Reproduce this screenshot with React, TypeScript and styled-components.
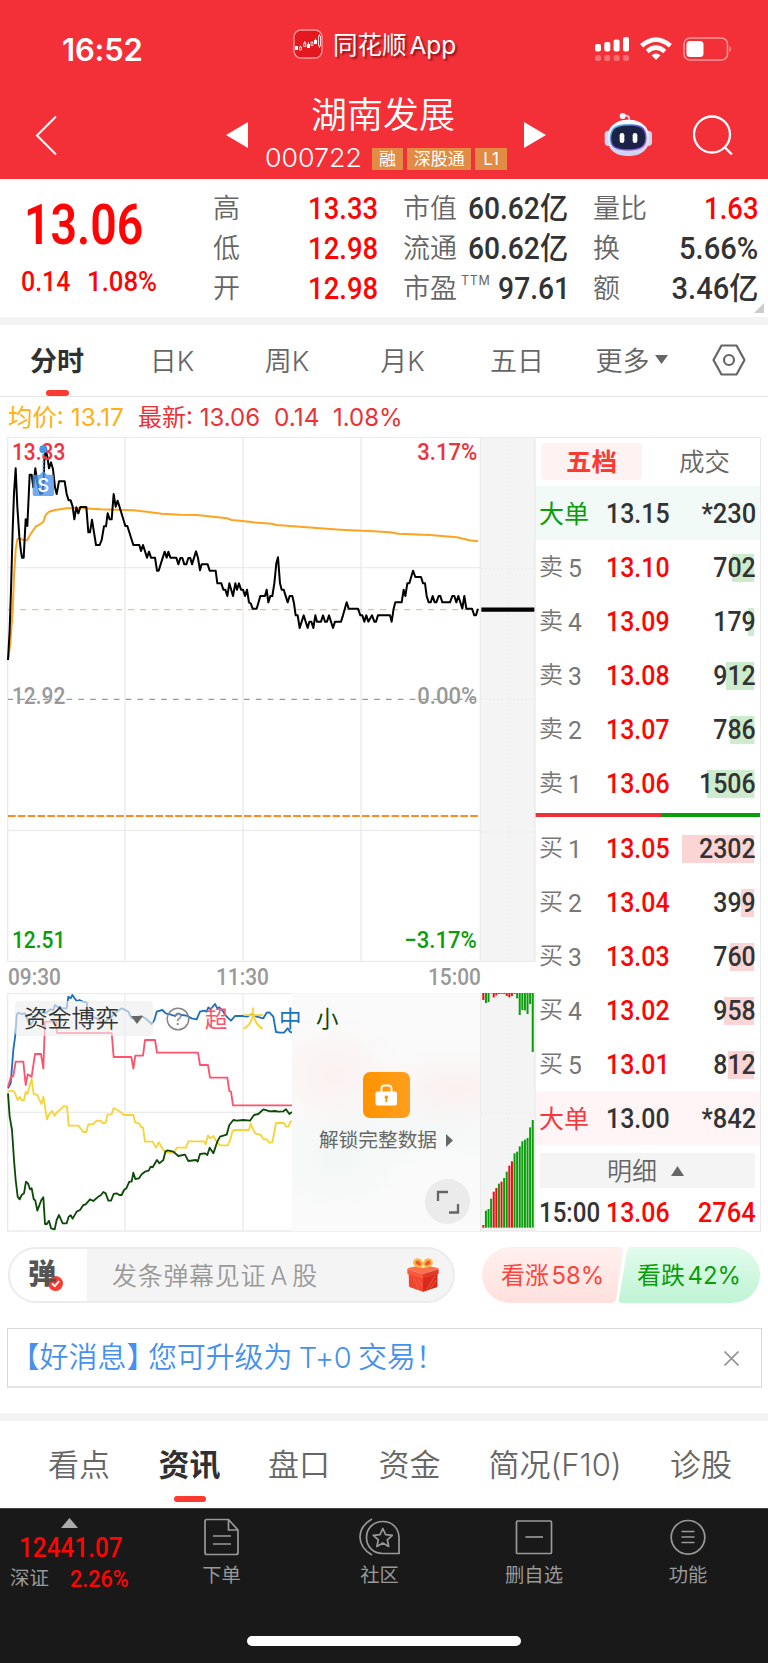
import React from "react";
import styled, { createGlobalStyle } from "styled-components";

const SANS = `Inter, "Noto Sans CJK SC", sans-serif`;
const DIN = `Roboto, "Noto Sans CJK SC", sans-serif`;

const Global = createGlobalStyle`
  * { box-sizing: border-box; }
  body { margin: 0; background: #fff; font-family: ${SANS}; color: #333; }
  svg { display: block; flex: none; }
`;

const Page = styled.div`
  width: 768px;
  height: 1663px;
  overflow: hidden;
  background: #fff;
  display: flex;
  flex-direction: column;
`;

type TextProps = {
  $size: number;
  $color?: string;
  $weight?: number;
  $fit?: number;
  $origin?: string;
  $track?: number;
  $space?: number;
};

const Label = styled.span<TextProps>`
  display: inline-block;
  flex: none;
  white-space: nowrap;
  line-height: 1.2;
  font-family: ${SANS};
  font-size: ${(p) => p.$size}px;
  color: ${(p) => p.$color ?? "#666"};
  font-weight: ${(p) => p.$weight ?? 400};
  letter-spacing: ${(p) => p.$track ?? 0}px;
  word-spacing: ${(p) => p.$space ?? 0}px;
  transform: scaleX(${(p) => p.$fit ?? 1});
  transform-origin: ${(p) => p.$origin ?? "left"} center;
`;

const Figure = styled(Label)`
  font-family: ${DIN};
`;

/* ---------- header ---------- */

const Header = styled.header`
  flex: none;
  height: 179px;
  background: #f33038;
  color: #fff;
`;

const StatusBar = styled.div`
  height: 90px;
  padding: 8px 0 0 62px;
  display: flex;
  align-items: center;
`;

const Clock = styled.div`
  width: 231px;
  font-size: 31px;
  font-weight: 600;
  line-height: 36px;
  letter-spacing: -0.2px;
  padding-bottom: 2px;
  margin-top: 3px;
`;

const AppBadge = styled.div`
  width: 302px;
  display: flex;
  align-items: center;
  gap: 10px;
  padding-bottom: 10px;
  text-shadow: 2px 2px 2px rgba(90, 0, 0, 0.65);
`;

const AppName = styled.div`
  padding-top: 4px;
`;

const StatusIcons = styled.div`
  display: flex;
  align-items: center;
  gap: 11px;
  padding-bottom: 5px;
  margin-top: 4px;
`;

const NavBar = styled.div`
  height: 89px;
  display: flex;
  align-items: center;
`;

const NavTitle = styled.div`
  width: 276px;
  height: 89px;
  padding-top: 2px;
  display: flex;
  flex-direction: column;
  align-items: center;
`;

const StockName = styled.div`
  font-size: 36px;
  line-height: 44px;
  font-weight: 350;
  margin-left: -6px;
  padding-top: 1px;
`;

const CodeRow = styled.div`
  width: 242px;
  height: 24px;
  margin-top: 10px;
  display: flex;
  align-items: center;
  gap: 4px;
`;

const CodeBox = styled.div`
  width: 103px;
  margin-top: -2px;
`;

const Tag = styled.span<{ $w: number }>`
  width: ${(p) => p.$w}px;
  height: 22px;
  line-height: 22px;
  background: #e18b45;
  font-size: 17px;
  text-align: center;
  white-space: nowrap;
`;

const Spacer = styled.div<{ $w: number }>`
  flex: none;
  width: ${(p) => p.$w}px;
`;

/* ---------- quote summary ---------- */

const Quote = styled.section`
  flex: none;
  height: 138px;
  display: flex;
  position: relative;
`;

const PriceBlock = styled.div`
  width: 213px;
  padding: 13px 0 0 21px;
`;

const LastPrice = styled.div`
  padding-left: 3px;
`;

const ChangeRow = styled.div`
  display: flex;
  padding-top: 7px;
`;

const ChangeCell = styled.div<{ $w: number }>`
  width: ${(p) => p.$w}px;
`;

const StatColumn = styled.div<{ $w: number; $gap: number }>`
  width: ${(p) => p.$w}px;
  margin-right: ${(p) => p.$gap}px;
  padding-top: 10px;
`;

const StatRow = styled.div`
  height: 40px;
  display: flex;
  align-items: center;
  justify-content: space-between;
`;

const StatName = styled.div`
  display: flex;
  align-items: flex-start;
  gap: 4px;
`;

const Corner = styled.i`
  position: absolute;
  right: 4px;
  bottom: 4px;
  border-left: 10px solid transparent;
  border-bottom: 10px solid #ccc;
`;

const Divider = styled.div<{ $h: number }>`
  flex: none;
  height: ${(p) => p.$h}px;
  background: #f4f4f4;
`;

/* ---------- tabs ---------- */

const PeriodTabs = styled.nav`
  flex: none;
  height: 72px;
  border-bottom: 1px solid #e8e8e8;
  display: flex;
`;

const Tab = styled.div<{ $w: number; $active?: boolean; $size?: number }>`
  flex: none;
  width: ${(p) => p.$w}px;
  height: 100%;
  padding-bottom: 2px;
  display: flex;
  align-items: center;
  justify-content: center;
  gap: 5px;
  position: relative;
  font-size: ${(p) => p.$size ?? 27}px;
  white-space: nowrap;
  font-weight: ${(p) => (p.$active ? 600 : 350)};
  color: ${(p) => (p.$active ? "#303030" : "#666")};
`;

const Underline = styled.i<{ $w: number; $bottom: number }>`
  position: absolute;
  left: calc(50% - ${(p) => p.$w / 2}px);
  bottom: ${(p) => p.$bottom}px;
  width: ${(p) => p.$w}px;
  height: 6px;
  border-radius: 3px;
  background: #fd3a32;
`;

const InfoRow = styled.div`
  flex: none;
  height: 40px;
  padding: 2px 0 0 8px;
  display: flex;
  align-items: center;
`;

const InfoCell = styled.div<{ $w: number }>`
  flex: none;
  width: ${(p) => p.$w}px;
`;

/* ---------- charts ---------- */

const Market = styled.section`
  flex: none;
  height: 795px;
  padding-left: 7px;
  display: flex;
`;

const Charts = styled.div`
  width: 528px;
`;

const ChartPane = styled.div<{ $h: number }>`
  position: relative;
  height: ${(p) => p.$h}px;
`;

const Mark = styled.div<{ $x?: number; $r?: number; $y: number }>`
  position: absolute;
  top: ${(p) => p.$y}px;
  ${(p) => (p.$x !== undefined ? `left: ${p.$x}px;` : "")}
  ${(p) => (p.$r !== undefined ? `right: ${p.$r}px;` : "")}
  height: 30px;
  display: flex;
  align-items: center;
`;

const Overlay = styled.div`
  position: absolute;
  left: 0;
  top: 0;
`;

const TimeAxis = styled.div`
  height: 31px;
  width: 474px;
  padding: 0 0 1px 1px;
  display: flex;
  justify-content: space-between;
  align-items: center;
`;

const NoonTime = styled.div`
  margin-right: 4px;
`;

const Picker = styled.div`
  position: absolute;
  left: 8px;
  top: 8px;
  width: 138px;
  height: 35px;
  padding: 2px 0 0 9px;
  border-radius: 4px;
  background: rgba(238, 238, 238, 0.66);
  display: flex;
  align-items: center;
  gap: 11px;
`;

const LockPanel = styled.div`
  position: absolute;
  left: 285px;
  top: 0;
  width: 188px;
  height: 238px;
  background: radial-gradient(ellipse 70px 60px at 42px 82px, rgba(253, 238, 238, 0.75), transparent),
    radial-gradient(ellipse 110px 40px at 165px 96px, rgba(252, 237, 237, 0.75), transparent),
    radial-gradient(ellipse 80px 60px at 45px 165px, rgba(240, 247, 244, 0.8), transparent),
    radial-gradient(ellipse 120px 40px at 140px 135px, rgba(242, 247, 246, 0.8), transparent), #fafafa;
  display: flex;
  flex-direction: column;
  align-items: center;
  padding-top: 79px;
`;

const UnlockRow = styled.div`
  display: flex;
  align-items: center;
  gap: 9px;
  margin-top: 11px;
`;

const Expand = styled.div`
  position: absolute;
  right: 10px;
  bottom: 7px;
  width: 45px;
  height: 45px;
  border-radius: 50%;
  background: #ebebeb;
  display: flex;
  align-items: center;
  justify-content: center;
`;

/* ---------- order book ---------- */

const Book = styled.aside`
  width: 226px;
  border: 1px solid #e9e9e9;
  border-width: 1px 1px 1px 0;
`;

const BookTabs = styled.div`
  height: 48px;
  padding: 5px 0 0 6px;
  display: flex;
`;

const BookTab = styled.div<{ $w: number; $active?: boolean }>`
  flex: none;
  width: ${(p) => p.$w}px;
  height: 37px;
  border-radius: 4px;
  text-align: center;
  line-height: 37px;
  font-size: 25.5px;
  background: ${(p) => (p.$active ? "#fff2f2" : "transparent")};
  color: ${(p) => (p.$active ? "#fd3a32" : "#666")};
  font-weight: ${(p) => (p.$active ? 700 : 350)};
`;

const BookRow = styled.div<{ $bg?: string; $h?: number }>`
  height: ${(p) => p.$h ?? 54}px;
  padding: 1px 0 0 4px;
  display: flex;
  align-items: center;
  background: ${(p) => p.$bg ?? "transparent"};
`;

const BookName = styled.div`
  flex: none;
  width: 67px;
  display: flex;
  align-items: center;
  gap: 5px;
`;

const PriceCell = styled.div`
  flex: none;
  width: 67px;
`;

const VolumeCell = styled.div<{ $tone: string }>`
  flex: none;
  width: 83px;
  height: 28px;
  display: flex;
  align-items: center;
  justify-content: flex-end;
  background: linear-gradient(${(p) => p.$tone}, ${(p) => p.$tone}) right 2px top 0 no-repeat;
`;

const Balance = styled.div`
  height: 4px;
  margin: 3px 0 4px;
  display: flex;
`;

const BalancePart = styled.div<{ $w: number; $c: string }>`
  width: ${(p) => p.$w}px;
  background: ${(p) => p.$c};
`;

const DetailBar = styled.div`
  height: 35px;
  margin: 8px 5px 5px;
  padding-right: 4px;
  background: #f4f4f4;
  display: flex;
  align-items: center;
  justify-content: center;
  gap: 14px;
`;

/* ---------- comment strip, notice ---------- */

const Social = styled.section`
  flex: none;
  height: 72px;
  padding: 15px 8px 0;
  display: flex;
  justify-content: space-between;
`;

const Comment = styled.div`
  width: 447px;
  height: 56px;
  border: 2px solid #ececec;
  border-radius: 28px;
  background: #f4f4f4;
  overflow: hidden;
  display: flex;
  align-items: center;
`;

const Danmu = styled.div`
  width: 77px;
  height: 100%;
  background: #fff;
  display: flex;
  align-items: center;
  padding-left: 18px;
`;

const Check = styled.div`
  margin: 17px 0 0 -8px;
`;

const CommentHint = styled.div`
  width: 295px;
  padding-top: 2px;
`;

const Sentiment = styled.div`
  position: relative;
  width: 278px;
  height: 56px;
`;

const SentimentText = styled.div`
  position: absolute;
  inset: 0;
  display: flex;
  align-items: center;
  padding: 2px 0 0 19px;
`;

const SentimentCell = styled.div<{ $w: number }>`
  width: ${(p) => p.$w}px;
`;

const Notice = styled.section`
  flex: none;
  height: 60px;
  margin: 24px 6px 25px 7px;
  border: 1px solid #d9d9d9;
  border-bottom: 2px solid #e4e4e4;
  padding: 2px 22px 0 17px;
  display: flex;
  align-items: center;
  justify-content: space-between;
`;

const NoticeText = styled.div`
  display: flex;
  align-items: center;
  gap: 7px;
  font-feature-settings: "halt";
`;

const NewsTabs = styled.nav`
  flex: none;
  height: 87px;
  padding: 0 0 3px 28px;
  display: flex;
`;

/* ---------- bottom bar ---------- */

const BottomBar = styled.footer`
  flex: none;
  height: 155px;
  background: #191919;
  border-top: 1px solid #444;
  position: relative;
  display: flex;
`;

const IndexBlock = styled.div`
  width: 144px;
  padding: 9px 0 0 10px;
`;

const IndexRow = styled.div<{ $indent: number; $h: number }>`
  height: ${(p) => p.$h}px;
  padding-left: ${(p) => p.$indent}px;
  display: flex;
  align-items: center;
`;

const Action = styled.div<{ $w: number }>`
  width: ${(p) => p.$w}px;
  padding-top: 9px;
  display: flex;
  flex-direction: column;
  align-items: center;
  gap: 8px;
`;

const HomeIndicator = styled.i`
  position: absolute;
  left: 247px;
  bottom: 17px;
  width: 274px;
  height: 10px;
  border-radius: 5px;
  background: #fff;
`;

/* ---------- data ---------- */

const MORNING =
  "24,690 29,600 33,480 38,300 42,190 47,115 52,230 58,320 63,365 66,383 71,383 77,268 82,288 89,134 95,134 100,172 106,115 112,160 121,192 127,190 131,150 133,90 137,60 142,80 147,115 153,97 159,118 165,172 170,192 177,154 194,154 200,192 206,211 212,211 218,230 223,268 229,232 235,250 241,231 259,231 265,307 270,307 276,269 282,307 288,345 299,345 305,330 312,289 318,289 323,250 329,268 335,268 341,192 347,230 353,212 359,232 376,288 382,288 400,345 418,345 423,363 429,345 441,383 447,365 453,383 465,383 471,422 476,422 494,365 500,383 505,365 511,383 529,383 535,403 541,384 547,384 553,403 559,403 565,384 571,384 576,403 588,364 594,384 600,421 605,403 623,403 629,422 647,422 652,460 664,460 670,479 676,479 682,498 688,460 699,498 706,460 711,479 717,460 723,479 729,479 735,498 741,479 747,518";
const AFTERNOON =
  "26,517 32,520 38,536 50,536 61,498 75,498 80,479 85,517 91,498 97,498 103,460 109,400 114,382 120,460 125,479 131,479 143,517 149,498 157,498 162,520 167,556 173,556 179,594 191,556 203,594 208,575 214,575 220,594 226,556 231,575 243,575 249,556 255,575 261,575 267,556 279,594 285,575 303,575 309,556 320,517 326,536 354,536 361,556 367,556 373,575 379,556 385,575 396,556 403,575 408,575 414,556 450,556 455,575 461,536 466,517 485,517 491,479 496,498 502,460 508,460 519,422 526,441 543,441 549,460 555,460 560,498 566,517 572,517 578,498 584,517 589,517 596,498 601,498 607,517 630,517 637,498 643,498 649,517 655,498 667,536 673,498 679,536 696,536 703,556 708,556 714,536";
const AVERAGE =
  "24,690 31,640 38,540 42,440 47,360 52,328 58,325 70,330 82,330 90,315 100,300 108,289 120,283 130,275 137,255 147,245 165,240 200,235 240,234 300,238 350,239 400,241 440,245 485,251 540,254 590,255 640,260 682,265 695,270 720,272 760,277 815,281 830,285 920,292 1020,299 1120,304 1170,307 1195,311 1290,315 1370,322 1390,326 1408,331 1434,334";
const FLOW_MID =
  "24,325 32,310 40,210 46,165 50,105 54,98 65,102 75,100 85,125 92,135 105,112 120,98 140,98 150,88 160,90 165,75 172,80 185,85 200,85 205,50 212,55 217,45 224,55 230,63 238,60 248,65 260,67 263,95 275,110 290,115 300,125 315,125 335,110 350,95 365,85 385,95 395,115 415,110 425,108 440,118 455,132 463,120 470,95 487,90 497,100 510,103 525,108 535,100 545,105 560,107 575,115 590,118 600,95 612,92 620,95 625,82 632,88 645,72 652,85 658,82 670,95 680,110 693,122 705,108 730,108 740,110 755,103 770,110 790,115 800,98 808,97 820,110 828,156 840,158 852,158 863,145 870,155 876,158";
const FLOW_SUPER =
  "24,320 33,290 40,288 47,245 70,245 77,315 83,283 95,290 105,222 123,222 130,266 135,125 168,125 171,159 335,159 341,231 394,231 400,266 406,227 429,227 435,180 465,180 471,218 594,218 600,255 624,255 630,293 682,293 688,333 693,335 699,376 877,376";
const FLOW_LARGE =
  "24,335 35,332 43,335 53,360 59,350 66,362 72,360 77,335 82,342 95,297 101,342 112,345 124,372 130,350 141,418 147,403 156,393 164,407 172,395 180,390 190,379 201,379 206,437 235,437 250,456 259,456 265,433 280,432 290,422 303,423 308,430 317,428 323,403 335,403 341,384 352,390 360,395 372,405 400,405 406,428 417,430 424,442 429,442 435,485 458,485 468,503 476,487 490,510 500,517 523,519 530,503 558,503 565,484 612,484 617,493 624,466 630,475 640,468 650,485 660,496 683,496 690,482 697,455 702,450 747,450 752,430 760,450 767,461 782,465 790,477 800,478 808,488 817,487 828,429 852,429 858,440 865,440 872,424 876,424";
const FLOW_SMALL =
  "24,340 29,410 36,450 42,540 47,600 53,650 59,658 65,645 72,640 78,605 84,610 90,628 95,625 101,657 106,662 112,692 124,660 130,652 135,732 140,733 147,722 153,745 164,748 170,720 177,705 188,730 200,730 206,710 212,706 218,716 230,695 240,690 250,675 257,673 270,658 280,663 295,650 303,645 310,636 317,640 325,662 333,662 341,642 350,640 358,645 365,645 372,630 379,625 388,605 395,605 400,578 406,597 417,595 425,583 435,575 446,572 452,560 458,562 471,540 478,550 490,540 496,515 503,511 520,515 535,528 555,524 565,543 588,540 593,545 600,522 615,520 622,525 629,503 640,520 652,485 660,470 680,464 688,435 700,420 710,422 730,420 750,422 762,405 775,402 790,388 810,394 825,393 835,395 850,394 858,388 868,402 876,396";

const RISE = "#f00d12";
const FALL = "#0a9d0a";

/* colour and end of the hanging bar, colour and top of the standing bar */
const AUCTION: [string, number, string, number][] = [
  [RISE, 60, RISE, 735], [FALL, 69, FALL, 692], [FALL, 66, FALL, 687], [FALL, 40, FALL, 656],
  [RISE, 52, RISE, 635], [RISE, 46, RISE, 624], [RISE, 42, FALL, 611], [FALL, 42, RISE, 605],
  [RISE, 42, FALL, 594], [RISE, 48, FALL, 575], [RISE, 52, RISE, 557], [RISE, 48, RISE, 544],
  [FALL, 42, FALL, 520], [FALL, 55, FALL, 515], [FALL, 105, FALL, 499], [FALL, 90, FALL, 484],
  [FALL, 91, FALL, 479], [FALL, 102, FALL, 474], [FALL, 72, FALL, 442], [FALL, 216, FALL, 420],
];

const ASKS: [string, string, string, number][] = [
  ["5", "13.10", "702", 22], ["4", "13.09", "179", 6], ["3", "13.08", "912", 28],
  ["2", "13.07", "786", 24.5], ["1", "13.06", "1506", 47.5],
];
const BIDS: [string, string, string, number][] = [
  ["1", "13.05", "2302", 72], ["2", "13.04", "399", 13], ["3", "13.03", "760", 24],
  ["4", "13.02", "958", 30], ["5", "13.01", "812", 26],
];

const RED = "#fd0505";
const LINE = "#ebebeb";

/* ---------- pieces ---------- */

function Level({ side, row, tone }: { side: string; row: [string, string, string, number]; tone: string }) {
  const [level, price, volume, bar] = row;
  return (
    <BookRow>
      <BookName>
        <Label $size={24} $color="#777" $weight={350}>{side}</Label>
        <Figure $size={26.5} $color="#777" $fit={0.93}>{level}</Figure>
      </BookName>
      <PriceCell>
        <Figure $size={28} $color={RED} $weight={500} $fit={0.89}>{price}</Figure>
      </PriceCell>
      <VolumeCell $tone={tone} style={{ backgroundSize: `${bar}px 28px` }}>
        <Figure $size={28} $color="#333" $weight={500} $fit={0.89} $origin="right">{volume}</Figure>
      </VolumeCell>
    </BookRow>
  );
}

function Block({ color, bg, price, volume }: { color: string; bg: string; price: string; volume: string }) {
  return (
    <BookRow $bg={bg}>
      <BookName><Label $size={25} $color={color}>大单</Label></BookName>
      <PriceCell><Figure $size={28} $color="#333" $weight={500} $fit={0.89}>{price}</Figure></PriceCell>
      <VolumeCell $tone="transparent">
        <Figure $size={28} $color="#333" $weight={500} $fit={0.91} $origin="right">{volume}</Figure>
      </VolumeCell>
    </BookRow>
  );
}

type StatProps = { name: string; value: string; color?: string; note?: string; fit?: number };

function Stat({ name, value, color = "#333", note, fit = 0.885 }: StatProps) {
  return (
    <StatRow>
      <StatName>
        <Label $size={27} $weight={350}>{name}</Label>
        {note && <Label $size={12.5} $track={0.7}>{note}</Label>}
      </StatName>
      <Figure $size={31} $color={color} $weight={500} $fit={fit} $origin="right">{value}</Figure>
    </StatRow>
  );
}

function PriceChart() {
  return (
    <svg width="529" height="525" viewBox="21 21 1587 1575">
      <rect x="1443" y="22" width="162" height="1572" fill="#f4f4f4" />
      <g stroke={LINE} strokeWidth="4" fill="none">
        <path d="M22 22H1606M22 1594H1606M22 413H1441M22 1201H1441M375 22V1594M729 22V1594M1083 22V1594" />
        <path d="M23 22V1594M1441 22V1594M1605 22V1594" />
        <path d="M1443 416H1605M1526 22V1594M1443 808H1605M1443 1206H1605" strokeDasharray="4 8" />
      </g>
      <path d="M24 539H1432" stroke="#e0c39b" strokeWidth="4" strokeDasharray="18 18" />
      <path d="M24 808H1442" stroke="#999" strokeWidth="4" strokeDasharray="17 18.5" strokeDashoffset="2" />
      <path d="M24 1158H1434" stroke="#fd8c25" strokeWidth="6" strokeDasharray="23 6.5" />
      <g fill="none" strokeLinejoin="round">
        <polyline points={AVERAGE} stroke="#ffa321" strokeWidth="6" />
        <polyline points={MORNING} stroke="#000" strokeWidth="6" />
        <polyline points={AFTERNOON} stroke="#000" strokeWidth="6" transform="translate(720 0)" />
      </g>
      <path d="M1444 539H1603" stroke="#000" strokeWidth="13" />
    </svg>
  );
}

function SellMarker() {
  return (
    <svg width="529" height="525" viewBox="21 21 1587 1575">
      <path d="M130 60V128" stroke="#4a93ea" strokeWidth="5" strokeDasharray="6 5" />
      <circle cx="130" cy="58" r="12" fill="#4a93ea" />
      <path d="M104 134H119L130 122L141 134H157Q162 134 162 139V193Q162 198 157 198H103Q98 198 98 193V139Q98 134 104 134Z" fill="#4a93ea" opacity=".78" />
      <text x="130" y="186" textAnchor="middle" fontFamily="Inter" fontSize="54" fontWeight="500" fill="#fff">S</text>
    </svg>
  );
}

function FlowChart() {
  return (
    <svg width="529" height="239" viewBox="21 39 1587 717">
      <rect x="1443" y="40" width="162" height="713" fill="#f4f4f4" />
      <g stroke={LINE} strokeWidth="4" fill="none">
        <path d="M22 41H1606M22 753H1606M22 397H876M375 41V753M729 41V753M23 41V753M1441 41V753M1605 41V753" />
        <path d="M1443 400H1605M1526 41V753" strokeDasharray="4 8" />
      </g>
      <g fill="none" strokeWidth="5.5" strokeLinejoin="round">
        <polyline points={FLOW_MID} stroke="#1c70bd" />
        <polyline points={FLOW_SUPER} stroke="#ff526d" />
        <polyline points={FLOW_LARGE} stroke="#f7d436" />
        <polyline points={FLOW_SMALL} stroke="#0d4a07" />
      </g>
      {AUCTION.map(([top, end, bottom, start], i) => (
        <g key={i} transform={`translate(${1447 + i * 7.8} 0)`}>
          <rect y="39" width="6" height={end - 39} fill={top} />
          <rect y={start} width="6" height={743 - start} fill={bottom} />
        </g>
      ))}
    </svg>
  );
}

function AppIcon() {
  return (
    <svg width="30" height="30" viewBox="0 0 30 30">
      <rect x="1" y="1" width="28" height="28" rx="7" fill="#e3191f" stroke="#ff9a9c" strokeWidth="1.3" />
      <path d="M2 17h3v4H2zM14 15h3v4h-3zM21 11h3v4h-3z" fill="#fff" />
      <path d="M6.500 18h2v3h-2zM10.800 14h2v3.500h-2zM18 13.500h2v3h-2zM25.500 7h2v10h-2zM7.500 16.800V18M11.800 12v2M15.500 13v2M19 12v1.500M22.500 9.500v2M26.500 5v2M26.500 17v2" fill="none" stroke="#fff" strokeWidth=".8" />
    </svg>
  );
}

function Robot() {
  return (
    <svg width="49" height="45" viewBox="0 0 147 135">
      <defs>
        <linearGradient id="shell" x1="0" y1="0" x2="0" y2="1">
          <stop offset="0" stopColor="#fff" />
          <stop offset="1" stopColor="#c9d1f0" />
        </linearGradient>
        <linearGradient id="rim" x1="0" y1="0" x2="1" y2="1">
          <stop offset="0" stopColor="#45d4f5" />
          <stop offset=".45" stopColor="#5b4ee0" />
          <stop offset="1" stopColor="#c763e8" />
        </linearGradient>
      </defs>
      <path d="M58 12Q76 6 76 24" fill="none" stroke="#dfe4f5" strokeWidth="5" />
      <circle cx="56" cy="12" r="9" fill="#f3f5fc" />
      <rect x="2" y="56" width="22" height="46" rx="11" fill="#cfd5ef" />
      <rect x="122" y="56" width="22" height="46" rx="11" fill="#cfd5ef" />
      <path d="M73 23C113 23 136 46 136 78C136 116 108 132 73 132S10 116 10 78C10 46 33 23 73 23Z" fill="url(#shell)" />
      <path d="M73 37C108 37 128 44 128 78C128 108 108 116 73 116S18 108 18 78C18 44 38 37 73 37Z" fill="url(#rim)" />
      <path d="M73 41C106 41 124 48 124 78C124 105 106 112 73 112S22 105 22 78C22 48 40 41 73 41Z" fill="#1a2345" />
      <rect x="47" y="63" width="14" height="30" rx="7" fill="#fff" />
      <rect x="86" y="63" width="14" height="30" rx="7" fill="#fff" />
    </svg>
  );
}

function Gift() {
  return (
    <svg width="32" height="34" viewBox="0 0 96 102">
      <path d="M5 46L48 60L91 46V84Q91 87 88 88L48 101L9 88Q6 87 6 84Z" fill="#f2452f" />
      <path d="M48 60L91 46V84Q91 87 88 88L48 101Z" fill="#d92a1f" />
      <path d="M1 34Q1 31 4 30L48 20L92 30Q95 31 95 34L48 48Z" fill="#f9704e" />
      <path d="M1 34L48 48V62L3 49Q1 48 1 46Z" fill="#f9583d" />
      <path d="M95 34L48 48V62L93 49Q95 48 95 46Z" fill="#e23a28" />
      <path d="M20 58L36 94M34 64L44 84M60 94L84 54M70 92L88 66" stroke="#ff7a55" strokeWidth="2.500" opacity=".7" />
      <path d="M48 26C24 27 16 14 26 6C36 0 46 10 48 26C50 10 60 0 70 6C80 14 72 27 48 26Z" fill="#f6552f" stroke="#fcb643" strokeWidth="7" />
      <circle cx="48" cy="25" r="6" fill="#ffdf7a" />
    </svg>
  );
}

const Tri = ({ w, h, d, c }: { w: number; h: number; d: string; c: string }) => (
  <svg width={w} height={h} viewBox={`0 0 ${w} ${h}`}><path d={d} fill={c} /></svg>
);

export default function App() {
  return (
    <Page>
      <Global />
      <Header>
        <StatusBar>
          <Clock>16:52</Clock>
          <AppBadge>
            <AppIcon />
            <AppName><Label $size={24.5} $color="#fff" $space={-4}>同花顺 App</Label></AppName>
          </AppBadge>
          <StatusIcons>
            <svg width="34" height="24" viewBox="0 0 34 24" fill="#fff">
              <rect y="7" width="6" height="7.500" rx="2" />
              <rect x="9.300" y="5" width="6" height="9.500" rx="2" />
              <rect x="18.600" y="2.500" width="6" height="12" rx="2" />
              <rect x="28" width="6" height="14.500" rx="2" />
              <g opacity=".3">
                <rect y="18" width="6" height="6" rx="2" /><rect x="9.300" y="18" width="6" height="6" rx="2" />
                <rect x="18.600" y="18" width="6" height="6" rx="2" /><rect x="28" y="18" width="6" height="6" rx="2" />
              </g>
            </svg>
            <svg width="32" height="23" viewBox="0 0 32 23">
              <g fill="none" stroke="#fff" strokeWidth="4.600">
                <path d="M1.600 8.800Q16-3.600 30.400 8.800" />
                <path d="M7.200 14.400Q16 7 24.800 14.400" />
              </g>
              <path d="M11.500 18.300Q16 14.800 20.500 18.300L16 23Z" fill="#fff" />
            </svg>
            <svg width="50" height="24" viewBox="0 0 50 24">
              <rect x="1" y="1" width="43.500" height="22" rx="6" fill="none" stroke="#fff" strokeOpacity=".5" strokeWidth="1.500" />
              <rect x="3.500" y="4" width="17" height="16" rx="3.500" fill="#fff" />
              <path d="M46.500 8.500Q49.500 12 46.500 15.500Z" fill="#fff" opacity=".5" />
            </svg>
          </StatusIcons>
        </StatusBar>
        <NavBar>
          <Spacer $w={35} />
          <svg width="23" height="41" viewBox="0 0 23 41"><path d="M21 2.500L2 21.500L21 40.500" fill="none" stroke="#fff" strokeWidth="2" /></svg>
          <Spacer $w={168} />
          <Tri w={22} h={26} d="M22 0V26L0 13Z" c="#fff" />
          <NavTitle>
            <StockName>湖南发展</StockName>
            <CodeRow>
              <CodeBox><Label $size={26} $color="#fff" $weight={350} $fit={1.03}>000722</Label></CodeBox>
              <Tag $w={32}>融</Tag>
              <Tag $w={64}>深股通</Tag>
              <Tag $w={32}>L1</Tag>
            </CodeRow>
          </NavTitle>
          <Tri w={22} h={26} d="M0 0V26L22 13Z" c="#fff" />
          <Spacer $w={58} />
          <Robot />
          <Spacer $w={40} />
          <svg width="40" height="40" viewBox="0 0 40 40" fill="none" stroke="#fff" strokeWidth="2.300">
            <circle cx="19" cy="19.500" r="18" /><path d="M31.500 32L39 39.500" />
          </svg>
        </NavBar>
      </Header>

      <Quote>
        <PriceBlock>
          <LastPrice><Figure $size={55} $color={RED} $weight={600} $fit={0.845}>13.06</Figure></LastPrice>
          <ChangeRow>
            <ChangeCell $w={66}><Figure $size={28} $color={RED} $weight={500} $fit={0.89}>0.14</Figure></ChangeCell>
            <Figure $size={28} $color={RED} $weight={500} $fit={0.92}>1.08%</Figure>
          </ChangeRow>
        </PriceBlock>
        <StatColumn $w={165} $gap={25}>
          <Stat name="高" value="13.33" color={RED} />
          <Stat name="低" value="12.98" color={RED} />
          <Stat name="开" value="12.98" color={RED} />
        </StatColumn>
        <StatColumn $w={165} $gap={25}>
          <Stat name="市值" value="60.62亿" fit={0.91} />
          <Stat name="流通" value="60.62亿" fit={0.91} />
          <Stat name="市盈" value="97.61" note="TTM" fit={0.91} />
        </StatColumn>
        <StatColumn $w={165} $gap={10}>
          <Stat name="量比" value="1.63" color={RED} />
          <Stat name="换" value="5.66%" fit={0.94} />
          <Stat name="额" value="3.46亿" fit={0.94} />
        </StatColumn>
        <Corner />
      </Quote>
      <Divider $h={8} />

      <PeriodTabs>
        <Tab $w={114} $active>分时<Underline $w={23} $bottom={0} /></Tab>
        <Tab $w={116}>日K</Tab>
        <Tab $w={114}>周K</Tab>
        <Tab $w={117}>月K</Tab>
        <Tab $w={112}>五日</Tab>
        <Tab $w={117}>更多<Tri w={13} h={9} d="M0 0H13L6.500 9Z" c="#666" /></Tab>
        <Tab $w={77}>
          <svg width="34" height="32" viewBox="0 0 34 32" fill="none" stroke="#666" strokeWidth="2.200">
            <path d="M9.500 1.500H24.500L32.500 16L24.500 30.500H9.500L1.500 16Z" strokeLinejoin="round" /><circle cx="17" cy="16" r="5" />
          </svg>
        </Tab>
      </PeriodTabs>
      <InfoRow>
        <InfoCell $w={130}><Label $size={24} $color="#ffb012" $fit={1.018}>均价: 13.17</Label></InfoCell>
        <InfoCell $w={136}><Label $size={24} $color="#ee3037">最新: 13.06</Label></InfoCell>
        <InfoCell $w={59}><Label $size={24} $color="#ee3037" $fit={1.02}>0.14</Label></InfoCell>
        <Label $size={24} $color="#ee3037">1.08%</Label>
      </InfoRow>

      <Market>
        <Charts>
          <ChartPane $h={525}>
            <PriceChart />
            <Mark $x={5} $y={0}><Figure $size={24} $color="#f0303a" $weight={500} $fit={0.87}>13.33</Figure></Mark>
            <Mark $r={58} $y={0}><Figure $size={24} $color="#f0303a" $weight={500} $fit={0.92} $origin="right">3.17%</Figure></Mark>
            <Mark $x={5} $y={244}><Figure $size={24} $color="#999" $weight={500} $fit={0.87}>12.92</Figure></Mark>
            <Mark $r={58} $y={244}><Figure $size={24} $color="#999" $weight={500} $fit={0.92} $origin="right">0.00%</Figure></Mark>
            <Mark $x={5} $y={488}><Figure $size={24} $color={FALL} $weight={500} $fit={0.87}>12.51</Figure></Mark>
            <Mark $r={58} $y={488}><Figure $size={24} $color={FALL} $weight={500} $fit={0.92} $origin="right">−3.17%</Figure></Mark>
            <Overlay><SellMarker /></Overlay>
          </ChartPane>
          <TimeAxis>
            <Figure $size={24} $color="#999" $weight={500} $fit={0.87}>09:30</Figure>
            <NoonTime><Figure $size={24} $color="#999" $weight={500} $fit={0.87} $origin="center">11:30</Figure></NoonTime>
            <Figure $size={24} $color="#999" $weight={500} $fit={0.87} $origin="right">15:00</Figure>
          </TimeAxis>
          <ChartPane $h={239}>
            <FlowChart />
            <Picker>
              <Label $size={24} $color="#333" $weight={350} $fit={0.99}>资金博弈</Label>
              <Tri w={12} h={8} d="M0 0H12L6 8Z" c="#666" />
            </Picker>
            <Mark $x={159} $y={11}>
              <svg width="24" height="24" viewBox="0 0 24 24">
                <circle cx="12" cy="12" r="10.800" fill="none" stroke="#888" strokeWidth="1.500" />
                <text x="12" y="17.500" textAnchor="middle" fontFamily="Inter" fontSize="16" fill="#888">?</text>
              </svg>
            </Mark>
            <LockPanel>
              <svg width="47" height="46" viewBox="0 0 47 46">
                <defs><linearGradient id="lock"><stop offset="0" stopColor="#ff9300" /><stop offset="1" stopColor="#ff9f1e" /></linearGradient></defs>
                <rect width="47" height="46" rx="7" fill="url(#lock)" />
                <path d="M18.500 21V16.500Q18.500 13.500 21.500 13.500H25.500Q28.500 13.500 28.500 16.500V21" fill="none" stroke="#fff" strokeWidth="1.800" />
                <rect x="12.500" y="19.500" width="21.500" height="14" rx="2" fill="#fff" />
                <path d="M23.300 23.500a1.800 1.800 0 0 1 .9 3.300V30h-1.800v-3.200a1.800 1.800 0 0 1 .9-3.300Z" fill="#ff9300" />
              </svg>
              <UnlockRow>
                <Label $size={19.7} $color="#666">解锁完整数据</Label>
                <Tri w={7} h={13} d="M0 0L7 6.500L0 13Z" c="#666" />
              </UnlockRow>
              <Expand>
                <svg width="24" height="24" viewBox="0 0 24 24" fill="none" stroke="#666" strokeWidth="2.300">
                  <path d="M2 11V2H12M22 14V22.500H13" />
                </svg>
              </Expand>
            </LockPanel>
            <Mark $x={198} $y={10}><Label $size={22.5} $color="#ff526d">超</Label></Mark>
            <Mark $x={235} $y={10}><Label $size={22.5} $color="#f7d436">大</Label></Mark>
            <Mark $x={272} $y={10}><Label $size={22.5} $color="#1c70bd">中</Label></Mark>
            <Mark $x={309} $y={10}><Label $size={22.5} $color="#0d4a07">小</Label></Mark>
          </ChartPane>
        </Charts>
        <Book>
          <BookTabs>
            <BookTab $w={101} $active>五档</BookTab>
            <BookTab $w={125}>成交</BookTab>
          </BookTabs>
          <Block color={FALL} bg="#f1faf6" price="13.15" volume="*230" />
          {ASKS.map((r) => <Level key={r[0]} side="卖" row={r} tone="#cdebcd" />)}
          <Balance>
            <BalancePart $w={126} $c="#ee2f35" />
            <BalancePart $w={99} $c={FALL} />
          </Balance>
          {BIDS.map((r) => <Level key={r[0]} side="买" row={r} tone="#fbd4d6" />)}
          <Block color="#f23a3f" bg="#fff5f6" price="13.00" volume="*842" />
          <DetailBar>
            <Label $size={25} $weight={350}>明细</Label>
            <Tri w={13} h={10} d="M0 10H13L6.500 0Z" c="#666" />
          </DetailBar>
          <BookRow $h={39}>
            <BookName><Figure $size={28} $color="#333" $weight={500} $fit={0.86}>15:00</Figure></BookName>
            <PriceCell><Figure $size={28} $color={RED} $weight={500} $fit={0.89}>13.06</Figure></PriceCell>
            <VolumeCell $tone="transparent"><Figure $size={28} $color={RED} $weight={500} $fit={0.91} $origin="right">2764</Figure></VolumeCell>
          </BookRow>
        </Book>
      </Market>

      <Social>
        <Comment>
          <Danmu>
            <Label $size={28} $color="#555" $weight={900}>弹</Label>
            <Check>
              <svg width="15" height="15" viewBox="0 0 15 15"><circle cx="7.500" cy="7.500" r="7.500" fill="#fd3a32" /><path d="M4 7.500L6.800 10.200L11.200 5" fill="none" stroke="#fff" strokeWidth="1.800" /></svg>
            </Check>
          </Danmu>
          <Spacer $w={25} />
          <CommentHint><Label $size={25} $color="#999" $weight={350} $track={0.7} $space={-3.5}>发条弹幕见证 A 股</Label></CommentHint>
          <Gift />
        </Comment>
        <Sentiment>
          <svg width="278" height="56" viewBox="0 0 278 56">
            <defs>
              <linearGradient id="bull" x1="0" y1="0" x2="0" y2="1"><stop offset="0" stopColor="#fff0ee" /><stop offset="1" stopColor="#ffe1de" /></linearGradient>
              <linearGradient id="bear" x1="0" y1="0" x2="0" y2="1"><stop offset="0" stopColor="#e2fbed" /><stop offset="1" stopColor="#bff4d4" /></linearGradient>
            </defs>
            <path d="M28 0H138Q141.500 0 141 4L134 52Q133.500 56 129 56H28A28 28 0 0 1 28 0Z" fill="url(#bull)" />
            <path d="M151 0H250A28 28 0 0 1 250 56H140Q136.500 56 137 52L145 4Q146 0 151 0Z" fill="url(#bear)" />
          </svg>
          <SentimentText>
            <SentimentCell $w={136}><Label $size={24} $color="#fb4640" $fit={0.995} $space={-4}>看涨 58%</Label></SentimentCell>
            <Label $size={24} $color={FALL} $fit={0.995} $space={-4}>看跌 42%</Label>
          </SentimentText>
        </Sentiment>
      </Social>

      <Notice>
        <NoticeText>
          <Label $size={29} $color="#4691ee" $weight={350}>【好消息】</Label>
          <Label $size={29} $color="#4691ee" $weight={350} $space={-1.5} $track={-0.15}>您可升级为 T+0 交易！</Label>
        </NoticeText>
        <svg width="15" height="15" viewBox="0 0 15 15"><path d="M.5.500L14.500 14.500M14.500.500L.5 14.500" stroke="#999" strokeWidth="1.800" /></svg>
      </Notice>
      <Divider $h={8} />

      <NewsTabs>
        <Tab $size={31} $w={102}>看点</Tab>
        <Tab $size={31} $w={119} $active>资讯<Underline $w={32} $bottom={3} /></Tab>
        <Tab $size={31} $w={100}>盘口</Tab>
        <Tab $size={31} $w={121}>资金</Tab>
        <Tab $size={31} $w={170}>简况(F10)</Tab>
        <Tab $size={31} $w={122}>诊股</Tab>
      </NewsTabs>

      <BottomBar>
        <IndexBlock>
          <IndexRow $indent={51} $h={10}><Tri w={17} h={10} d="M0 10H17L8.500 0Z" c="#aaa" /></IndexRow>
          <IndexRow $indent={9} $h={39}><Figure $size={28} $color={RED} $weight={500} $fit={0.87}>12441.07</Figure></IndexRow>
          <IndexRow $indent={0} $h={24}>
            <Label $size={19.500} $color="#999">深证</Label>
            <Spacer $w={21} />
            <Figure $size={24} $color={RED} $weight={500} $fit={0.9}>2.26%</Figure>
          </IndexRow>
        </IndexBlock>
        <Action $w={155}>
          <svg width="36" height="38" viewBox="0 0 36 38" fill="none" stroke="#999" strokeWidth="1.700">
            <path d="M3 1.500H24.500L34 12V34.500Q34 36.500 32 36.500H3Q1 36.500 1 34.500V3.500Q1 1.500 3 1.500Z M24.500 1.500V12H34M9 18H27M9 26H27" />
          </svg>
          <Label $size={19.3} $color="#999">下单</Label>
        </Action>
        <Action $w={161}>
          <svg width="42" height="38" viewBox="0 0 42 38" fill="none" stroke="#999" strokeWidth="1.700">
            <path d="M13 1Q1 8 1 19T13 37" />
            <path d="M24 3.500C33 3.500 40 10 40 20V35.500H24C14 35.500 7.500 28.500 7.500 19.500S14 3.500 24 3.500Z" />
            <path d="M23.800 10.500L26.600 16.700L33.300 17.400L28.300 21.900L29.700 28.500L23.800 25.100L17.900 28.500L19.300 21.900L14.300 17.400L21 16.700Z" strokeLinejoin="round" />
          </svg>
          <Label $size={19.3} $color="#999">社区</Label>
        </Action>
        <Action $w={148}>
          <svg width="38" height="38" viewBox="0 0 38 38" fill="none" stroke="#999" strokeWidth="1.700">
            <rect x="1.500" y="3" width="35" height="32.500" rx="1" /><path d="M10.500 19H28" />
          </svg>
          <Label $size={19.3} $color="#999">删自选</Label>
        </Action>
        <Action $w={160}>
          <svg width="38" height="38" viewBox="0 0 38 38" fill="none" stroke="#999" strokeWidth="1.700">
            <circle cx="19" cy="19.300" r="16.800" /><path d="M12.500 13.500H25.500M12.500 19H25.500M12.500 24.500H25.500" />
          </svg>
          <Label $size={19.3} $color="#999">功能</Label>
        </Action>
        <HomeIndicator />
      </BottomBar>
    </Page>
  );
}
